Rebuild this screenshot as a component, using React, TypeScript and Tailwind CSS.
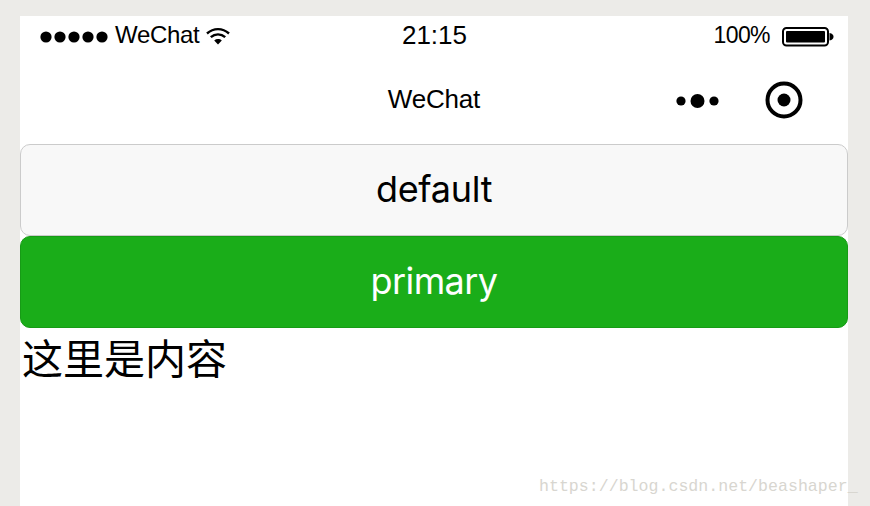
const sans = "font-['Helvetica_Neue','Liberation_Sans',Arial,sans-serif]";

function SignalDots() {
  return (
    <svg aria-hidden="true" viewBox="0 0 68 12" className="mt-[2px] h-3 w-[68px]" fill="#000">
      {[6, 20, 34, 48, 62].map((cx) => (
        <circle key={cx} cx={cx} cy="6" r="5.6" />
      ))}
    </svg>
  );
}

function WifiIcon() {
  return (
    <svg aria-hidden="true" viewBox="0 0 24 18" className="h-[18px] w-6" fill="none" stroke="#000" strokeWidth="2.4">
      <path d="M1 6.5C7.5 0.6 16.5 0.6 23 6.5" />
      <path d="M4.8 10.2C9 6.4 15 6.4 19.2 10.2" />
      <path d="M12 17.6L8.2 13.4C10.4 11.6 13.6 11.6 15.8 13.4Z" fill="#000" stroke="none" />
    </svg>
  );
}

function BatteryIcon() {
  return (
    <svg aria-hidden="true" viewBox="0 0 52 20" className="h-5 w-[52px]">
      <rect x="1" y="1" width="45" height="17.5" rx="3.5" fill="none" stroke="#000" strokeWidth="2" />
      <rect x="4" y="4" width="39" height="11.5" rx="1" fill="#000" />
      <path d="M47.5 6C50.5 6.5 51.5 8 51.5 9.8S50.5 13 47.5 13.5Z" fill="#000" />
    </svg>
  );
}

function MenuDots() {
  return (
    <svg aria-hidden="true" viewBox="0 0 44 16" className="h-4 w-11" fill="#000">
      <circle cx="5" cy="8" r="4.6" />
      <circle cx="21.5" cy="8" r="7" />
      <circle cx="38" cy="8" r="4.6" />
    </svg>
  );
}

function CloseTarget() {
  return (
    <svg aria-hidden="true" viewBox="0 0 38 38" className="h-[38px] w-[38px]" fill="none">
      <circle cx="19" cy="19" r="16.5" stroke="#000" strokeWidth="4" />
      <circle cx="19" cy="19" r="6.5" fill="#000" />
    </svg>
  );
}

export default function App() {
  return (
    <div className={`relative h-[506px] w-[870px] overflow-hidden bg-[#ecebe8] pt-4 ${sans}`}>
      <main className="mx-5 h-[490px] w-[828px] bg-white text-black">
        <div className="grid h-10 grid-cols-3 items-start pl-5 pr-[14px]">
          <div className="flex h-10 items-center">
            <SignalDots />
            <span className="ml-[7px] text-[24px] leading-[38px] mb-[2px] tracking-[-0.3px]">WeChat</span>
            <span className="ml-[7px]">
              <WifiIcon />
            </span>
          </div>
          <span className="pr-[5px] text-center text-[26px] leading-[38px]">21:15</span>
          <div className="flex h-10 items-center justify-end">
            <span className="mb-[2px] text-[23px] leading-[38px] tracking-[-0.6px]">100%</span>
            <span className="ml-3 mt-[1px]">
              <BatteryIcon />
            </span>
          </div>
        </div>

        <header className="relative flex h-[88px] items-center justify-center pb-[1px]">
          <h1 className="text-[26px] font-normal tracking-[-0.2px]">WeChat</h1>
          <div className="absolute top-[37px] right-[128px]">
            <MenuDots />
          </div>
          <div className="absolute top-[25px] right-[45px]">
            <CloseTarget />
          </div>
        </header>

        <button className="flex h-[92px] w-full items-center justify-center rounded-[10px] border border-[#cbcbcb] bg-[#f8f8f8] pb-[2px] font-['Inter',sans-serif] text-[36px] tracking-[-0.3px] text-black">
          default
        </button>
        <button className="flex h-[92px] w-full items-center justify-center rounded-[10px] border border-[#179b16] bg-[#1aad19] pb-[2px] font-['Inter',sans-serif] text-[36px] tracking-[-0.6px] text-white">
          primary
        </button>
        <p className="pl-[2px] text-[41px] leading-[56px] font-['Noto_Sans_CJK_SC',sans-serif]">这里是内容</p>
      </main>

      <span className="absolute top-[475px] left-[539px] text-[16.6px] leading-6 text-[#d8d6d0] font-['Liberation_Mono',monospace]">
        https://blog.csdn.net/beashaper_
      </span>
    </div>
  );
}
